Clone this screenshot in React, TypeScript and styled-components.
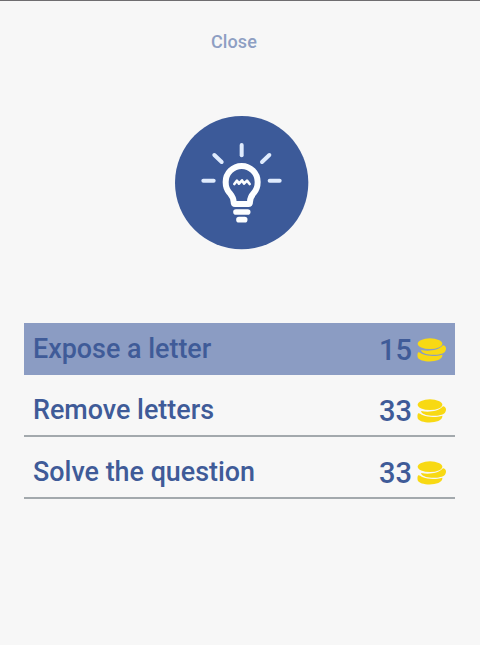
import React, {useState} from 'react';
import styled, {createGlobalStyle} from 'styled-components';

const GlobalStyle = createGlobalStyle`
  *{
    box-sizing: border-box;
  }
  body{
    margin: 0;
    background: #f7f7f7;
    font-family: Roboto, "Liberation Sans", sans-serif;
  }
`;

const Screen = styled.main`
  display: flex;
  flex-direction: column;
  align-items: center;
  height: 645px;
  border-top: 1px solid #6f6d70;
  background: #f7f7f7;
`;

const CloseButton = styled.button`
  margin: 30px 12px 0 0;
  padding: 0;
  border: none;
  background: none;
  color: #8e9fc3;
  font: 500 18px/22px Roboto, sans-serif;
  letter-spacing: 0.1px;
`;

const Badge = styled.svg`
  display: block;
  width: 135px;
  height: 135px;
  margin: 62px 0 0 3px;
`;

const HintList = styled.ul`
  display: flex;
  flex-direction: column;
  gap: 9px;
  width: 431px;
  margin: 73px 1px 0 0;
  padding: 0;
  list-style: none;
`;

const HintRow = styled.li<{ $selected: boolean }>`
  display: flex;
  align-items: center;
  height: ${p => p.$selected ? 52 : 53}px;
  padding: 0 8px 0 9px;
  border-bottom: ${p => p.$selected ? 'none' : '2px solid #a3a9ad'};
  background: ${p => p.$selected ? '#8b9cc3' : 'transparent'};
  color: #3f5b98;
  cursor: pointer;
`;

const Label = styled.span`
  flex: 1;
  font-size: 26.9px;
  font-weight: 500;
  line-height: 30px;
`;

const Price = styled.span`
  margin-top: 2px;
  font-size: 29px;
  font-weight: 500;
  line-height: 32px;
`;

const CoinIcon = styled.svg`
  display: block;
  width: 30px;
  height: 25px;
  margin: 3px 0 0 5px;
`;

const Coins: React.FC = () => (
    <CoinIcon viewBox="0 0 90 75" fill="#f8d913">
        <ellipse cx="39" cy="17" rx="37" ry="16"/>
        <path d="M13 36C32 41 64 38 78 22C87 23 90 33 84 41C72 54 22 54 13 39C12 38 12 37 13 36Z"/>
        <path d="M4 43C8 42 12 47 18 49C35 56 60 55 76 50C80 76 8 76 2 58C1 53 1 45 4 43Z"/>
    </CoinIcon>
);

const Bulb: React.FC = () => (
    <Badge viewBox="-2 -2 405 405" fill="none" strokeLinecap="round" strokeLinejoin="round">
        <circle cx="201" cy="201" r="200" fill="#3c5a99"/>
        <g stroke="#dfebfd" strokeWidth="12">
            <path d="M201 88V119"/>
            <path d="M119 118L141 139"/>
            <path d="M284 118L262 139"/>
            <path d="M86 195H117"/>
            <path d="M285 195H315"/>
        </g>
        <g stroke="#fcfeff">
            <path
                strokeWidth="18"
                d="M181 265C178 265 177 263 177 259C177 246 172 241 164 231C156 222 153 211 153 199A48 48 0 0 1 249 199C249 211 246 222 238 231C230 241 226 246 226 259C226 263 225 265 221 265Z"
            />
            <path strokeWidth="8" d="M179 205L187 195L193 204L202 194L208 204L217 195L225 205"/>
            <path strokeWidth="17" d="M184 289H219"/>
            <path strokeWidth="17" d="M193 312H210"/>
        </g>
    </Badge>
);

const hints = [
    {name: 'Expose a letter', price: 15},
    {name: 'Remove letters', price: 33},
    {name: 'Solve the question', price: 33},
];

const App: React.FC = () => {
    const [selected, setSelected] = useState(0);
    return (
        <Screen>
            <GlobalStyle/>
            <CloseButton>Close</CloseButton>
            <Bulb/>
            <HintList>
                {hints.map((hint, index) => (
                    <HintRow key={hint.name} $selected={index === selected} onClick={() => setSelected(index)}>
                        <Label>{hint.name}</Label>
                        <Price>{hint.price}</Price>
                        <Coins/>
                    </HintRow>
                ))}
            </HintList>
        </Screen>
    );
};

export default App;
